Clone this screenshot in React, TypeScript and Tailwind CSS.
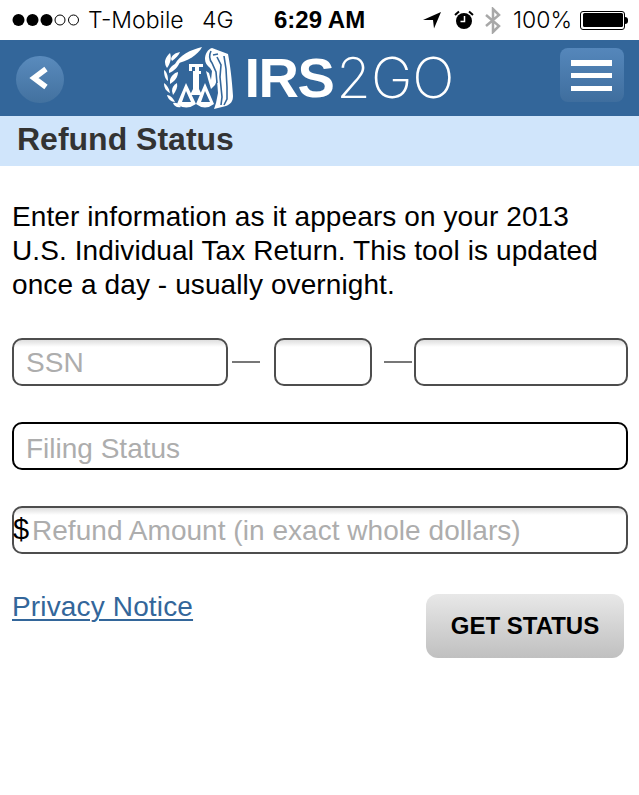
const sans = "font-['Liberation_Sans',Arial,sans-serif]"

function Signal() {
  return (
    <svg width="68" height="14" viewBox="0 0 68 14" className="shrink-0">
      <circle cx="6.500" cy="7" r="6" fill="#000" />
      <circle cx="20.500" cy="7" r="6" fill="#000" />
      <circle cx="34.500" cy="7" r="6" fill="#000" />
      <circle cx="48" cy="7" r="5" fill="none" stroke="#000" strokeWidth="1" />
      <circle cx="61.500" cy="7" r="5" fill="none" stroke="#000" strokeWidth="1" />
    </svg>
  )
}

function StatusIcons() {
  return (
    <>
      <svg width="18" height="18" viewBox="0 0 18 18" className="mr-[13px]">
        <path d="M0 9 18 1 11 17.500 10 9Z" fill="#000" />
      </svg>
      <svg width="20" height="20" viewBox="0 0 20 20" className="mr-[11px]">
        <path d="M1 5 5 1.500M19 5 15 1.500" stroke="#000" strokeWidth="2" />
        <circle cx="10" cy="11" r="8" fill="#000" />
        <path d="M10.500 6v5.500H6.500" stroke="#fff" strokeWidth="1.500" fill="none" />
      </svg>
      <svg width="16" height="27" viewBox="0 0 16 27" className="mr-[12px]">
        <path d="M1 8 14 19 8 25V2l6 6L1 19" stroke="#a8a8a8" strokeWidth="2.500" fill="none" />
      </svg>
    </>
  )
}

function Battery() {
  return (
    <div className="ml-2 flex items-center">
      <div className="h-[19px] w-[45px] rounded-[3px] border border-black p-[1.500px]">
        <div className="h-full w-full rounded-[1.500px] bg-black" />
      </div>
      <div className="h-[7px] w-[3px] rounded-r-sm bg-black" />
    </div>
  )
}

function Logo() {
  return (
    <svg width="69" height="62" viewBox="0 0 69 62" className="shrink-0">
      {/* laurel */}
      <g fill="#fff">
        <path d="M11 17C16 8 26 3 38 0 34 8 24 14 11 17Z" />
        <path d="M7 12C8 8 11 6 16 5 15 8 12 11 8 14Z" />
        <path d="M1 14C2 10 4 8 6 6 8 11 6 17 3 21 1 18 1 16 1 14Z" />
        <path d="M5 23C7 19 11 16 16 15 14 20 10 24 5 26Z" />
        <path d="M0 23C3 25 4 29 4 34 1 32 0 28 0 23Z" />
        <path d="M6 33C7 29 10 26 14 25 14 30 11 34 6 37Z" />
        <path d="M0 36C3 38 5 41 6 46 2 44 0 41 0 36Z" />
        <path d="M8 44C8 40 10 38 13 36 14 40 12 44 9 48Z" />
        <path d="M3 48C6 48 9 51 11 55 7 55 4 52 3 48Z" />
        <path d="M9 56C12 55 15 57 17 60 13 61 10 59 9 56Z" />
      </g>
      {/* scales */}
      <g fill="#fff">
        <path d="M25 17H39V20H35V24H37V27H35V42L38 48H26L29 42V24H31V20H28V24H25Z" />
        <path d="M22 36 13 57Q22 64 32 57ZM22 44 18 55H27Z" fillRule="evenodd" />
        <path d="M41 36 32 57Q41 64 50 57ZM41 44 37 55H46Z" fillRule="evenodd" />
      </g>
      {/* eagle */}
      <g fill="#fff">
        <path d="M41 12C41 7 44 2 48 1L56 4 64 7C66 17 68 32 69 49 69 54 67 57 62 59L50 62 52 56 54 46 53 33 51 38 47 42 44 32 42 24 45 26 47 33 48 24 46 21C43 18 41 16 41 12Z" />
      </g>
      <g fill="none" stroke="#33669a" strokeWidth="1.600">
        <path d="M47 4C45 8 45 12 48 16L52 25 53 36" />
        <path d="M53 10 57 18 56 30 58 50 57 58" />
        <path d="M60 9 62 22 63 40 63 52 60 58" />
        <path d="M49 8 54 7" />
      </g>
    </svg>
  )
}

function NavBar() {
  return (
    <div className="flex h-[76px] items-center justify-between bg-[#33669a] pl-4 pr-[15px]">
      <button className="mt-[2px] flex h-[47px] w-[48px] items-center justify-center rounded-full bg-gradient-to-b from-[#5a8bbd] to-[#42719f]">
        <svg width="20" height="24" viewBox="0 0 20 24" className="mb-[3px] mr-[3px]">
          <path d="M17 3 5 12l12 9" fill="none" stroke="#fff" strokeWidth="5.500" />
        </svg>
      </button>
      <div className="mr-[5px] flex items-center">
        <Logo />
        <span className={`${sans} ml-[11px] text-[56px] font-bold leading-none tracking-[-1.500px] text-white`}>IRS</span>
        <span className="ml-[3px] font-['Inter',sans-serif] text-[56px] font-extralight leading-none text-white">2GO</span>
      </div>
      <button className="mb-[6px] flex h-[54px] w-[64px] flex-col items-center justify-center gap-[7.500px] rounded-lg bg-gradient-to-b from-[#5587bb] to-[#3f6e9e]">
        <div className="h-[6px] w-[41px] bg-white" />
        <div className="h-[5px] w-[41px] bg-white" />
        <div className="h-[5px] w-[41px] bg-white" />
      </button>
    </div>
  )
}

const field =
  `h-12 rounded-[10px] border-2 border-[#4d4d4d] bg-gradient-to-b from-[#dedede] from-0% to-white to-[16%] pl-[12px] pr-[13px] pt-[2px] text-[28px] tracking-[0.04px] text-[#000] outline-none placeholder:text-[#adadad] ${sans}`

export default function App() {
  return (
    <div className={`${sans} min-h-[795px] w-[639px] bg-white`}>
      <div className="flex h-10 items-center pl-3 pr-[11px] text-[23px] text-black">
        <Signal />
        <span className="ml-2 w-[114px] font-['Inter',sans-serif] font-light tracking-[0px]">T-Mobile</span>
        <span className="w-[72px] font-['Inter',sans-serif] font-light">4G</span>
        <span className="text-[24px] font-bold">6:29 AM</span>
        <div className="ml-auto flex items-center">
          <StatusIcons />
          <span className="font-['Inter',sans-serif] font-light">100%</span>
          <Battery />
        </div>
      </div>
      <NavBar />
      <div className="flex h-[50px] items-center bg-[#d0e5fb] px-[17px] pb-1">
        <h1 className="text-[32px] font-bold text-[#333]">Refund Status</h1>
      </div>
      <div className="flex flex-col pl-3 pr-[11px] pt-[34px]">
        <p className="text-[28px] leading-[34px] tracking-[0.1px] text-black">
          Enter information as it appears on your 2013
          <br />
          U.S. Individual Tax Return. This tool is updated
          <br />
          once a day - usually overnight.
        </p>
        <div className="mt-[36px] flex items-center">
          <input placeholder="SSN" className={`${field} w-[216px]`} />
          <div className="ml-1 h-[2px] w-7 bg-[#777]" />
          <input className={`${field} ml-[14px] w-[98px]`} />
          <div className="ml-3 h-[2px] w-7 bg-[#777]" />
          <input className={`${field} ml-[2px] w-[214px]`} />
        </div>
        <input
          placeholder="Filing Status"
          className={`mt-9 h-12 w-[616px] rounded-[10px] border-2 border-black bg-white pl-[12px] pr-[13px] pt-[6px] text-[28px] outline-none placeholder:text-[#adadad] ${sans}`}
        />
        <div className="relative mt-9">
          <span className="absolute left-[1px] top-[2px] text-[29px] text-black">$</span>
          <input placeholder="Refund Amount (in exact whole dollars)" className={`${field} w-[616px] !pl-[18px]`} />
        </div>
        <div className="mt-10 flex items-start justify-between pr-[4px]">
          <a href="#" className="text-[28px] leading-[26px] tracking-[0.15px] text-[#33669a] underline underline-offset-[3px] decoration-[2px]">
            Privacy Notice
          </a>
          <button className="h-16 w-[198px] rounded-[12px] bg-gradient-to-b from-[#e8e8e8] to-[#c0c0c0] text-[24px] font-bold text-black">
            GET STATUS
          </button>
        </div>
      </div>
    </div>
  )
}
